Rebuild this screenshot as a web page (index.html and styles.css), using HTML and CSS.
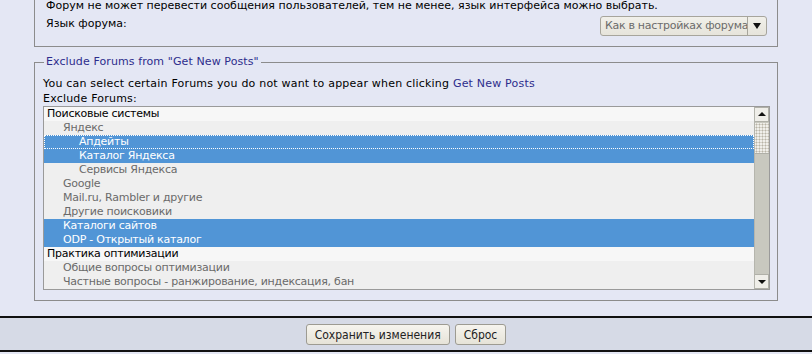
FILE: index.html
```html
<!DOCTYPE html>
<html lang="ru">
<head>
<meta charset="UTF-8">
<title>Настройки форума</title>
<link rel="stylesheet" href="styles.css">
</head>
<body>
<div class="page">
    <div class="panel">
        <div class="note">Форум не может перевести сообщения пользователей, тем не менее, язык интерфейса можно выбрать.</div>
        <div class="lang-row">
            <span class="label">Язык форума:</span>
            <div class="fake-select">
                <span class="fake-select-text">Как в настройках форума</span>
                <span class="fake-select-arrow"></span>
            </div>
        </div>
    </div>

    <fieldset class="exclude">
        <legend>Exclude Forums from "Get New Posts"</legend>
        <div class="line">You can select certain Forums you do not want to appear when clicking <span class="link">Get New Posts</span></div>
        <div class="line">Exclude Forums:</div>
        <div class="listbox">
            <div class="rows">
                <div class="row head">Поисковые системы</div>
                <div class="row lvl1">Яндекс</div>
                <div class="row lvl2 sel focus">Апдейты</div>
                <div class="row lvl2 sel">Каталог Яндекса</div>
                <div class="row lvl2">Сервисы Яндекса</div>
                <div class="row lvl1">Google</div>
                <div class="row lvl1">Mail.ru, Rambler и другие</div>
                <div class="row lvl1">Другие поисковики</div>
                <div class="row lvl1 sel">Каталоги сайтов</div>
                <div class="row lvl1 sel">ODP - Открытый каталог</div>
                <div class="row head">Практика оптимизации</div>
                <div class="row lvl1">Общие вопросы оптимизации</div>
                <div class="row lvl1">Частные вопросы - ранжирование, индексация, бан</div>
            </div>
            <div class="scrollbar">
                <div class="sb-btn up"></div>
                <div class="sb-thumb"></div>
                <div class="sb-track"></div>
                <div class="sb-btn down"></div>
            </div>
        </div>
    </fieldset>
</div>

<div class="submit-bar">
    <button class="btn">Сохранить изменения</button>
    <button class="btn">Сброс</button>
</div>
</body>
</html>
```

FILE: styles.css
```css
body {
    margin: 0;
    background-color: #e4e7f4;
    font-family: "DejaVu Sans", Verdana, sans-serif;
    font-size: 11px;
    color: #000;
}
.page {
    padding: 0 34px;
}
.panel {
    border: 1px solid #8c8c8c;
    border-top: none;
    padding: 0 10px 10px 11px;
}
.note {
    line-height: 14px;
    margin-top: -1px;
}
.lang-row {
    display: flex;
    justify-content: space-between;
    align-items: flex-start;
    margin-top: 3px;
}
.label {
    line-height: 16px;
}
.fake-select {
    display: flex;
    width: 165px;
    height: 18px;
    border: 1px solid #a7a59c;
    border-radius: 3px;
    background: linear-gradient(#f1f0ea, #e6e4db);
    color: #6b6b6b;
    line-height: 18px;
}
.fake-select-text {
    flex: 1;
    padding-left: 4px;
    letter-spacing: -0.3px;
    border-right: 1px solid #a7a59c;
    white-space: nowrap;
    overflow: hidden;
}
.fake-select-arrow {
    width: 18px;
    position: relative;
}
.fake-select-arrow::after {
    content: "";
    position: absolute;
    left: 5px;
    top: 6px;
    border-left: 4px solid transparent;
    border-right: 4px solid transparent;
    border-top: 6px solid #111;
}
.exclude {
    margin: 8px 0 0;
    padding: 7px 7px 10px 8px;
    border: 1px solid #8c8c8c;
}
.exclude legend {
    color: #2d2d8c;
    line-height: 14px;
    padding: 0 2px;
    margin-left: 1px;
    letter-spacing: 0.1px;
}
.line {
    line-height: 15px;
    letter-spacing: 0.2px;
}
.link {
    color: #2d2d8c;
}
.listbox {
    display: flex;
    border: 1px solid #9a9a9a;
    background-color: #efefef;
}
.rows {
    flex: 1;
}
.row {
    height: 14px;
    line-height: 14px;
    padding-left: 3px;
    color: #6a6a6a;
    white-space: nowrap;
    letter-spacing: -0.25px;
}
.row.head {
    color: #000;
    background-color: #f7f7f7;
}
.row.lvl1 {
    padding-left: 19px;
}
.row.lvl2 {
    padding-left: 35px;
}
.row.sel {
    background-color: #5195d6;
    color: #fff;
}
.row.focus {
    outline: 1px dotted #fff;
    outline-offset: -1px;
}
.scrollbar {
    width: 14px;
    display: flex;
    flex-direction: column;
    background-color: #c8c8bf;
    border-left: 1px solid #b5b5ad;
}
.sb-btn {
    height: 13px;
    background-color: #efeee9;
    border: 1px solid #b0b0a8;
    border-left: none;
    position: relative;
}
.sb-btn::after {
    content: "";
    position: absolute;
    left: 3px;
    border-left: 4px solid transparent;
    border-right: 4px solid transparent;
}
.sb-btn.up::after {
    top: 4px;
    border-bottom: 4px solid #111;
}
.sb-btn.down::after {
    top: 5px;
    border-top: 4px solid #111;
}
.sb-thumb {
    height: 30px;
    margin-top: 1px;
    background-color: #f0efea;
    background-image: radial-gradient(#b8b4a6 0.8px, transparent 1.2px);
    background-size: 3px 3px;
    background-position: 3px 3px;
    border-bottom: 1px solid #b0b0a8;
}
.sb-track {
    flex: 1;
}
.submit-bar {
    margin-top: 15px;
    border-top: 2px solid #111;
    border-bottom: 2px solid #111;
    background-color: #d6dae6;
    height: 32px;
    display: flex;
    justify-content: center;
    align-items: center;
    gap: 5px;
}
.btn {
    font-family: "DejaVu Sans Condensed", "DejaVu Sans", sans-serif;
    font-size: 12px;
    height: 21px;
    padding: 0 8px;
    border: 1px solid #9d9b92;
    border-radius: 3px;
    background: linear-gradient(#f6f4ee, #e6e3d8);
    color: #222;
    margin-top: 1px;
}
```
